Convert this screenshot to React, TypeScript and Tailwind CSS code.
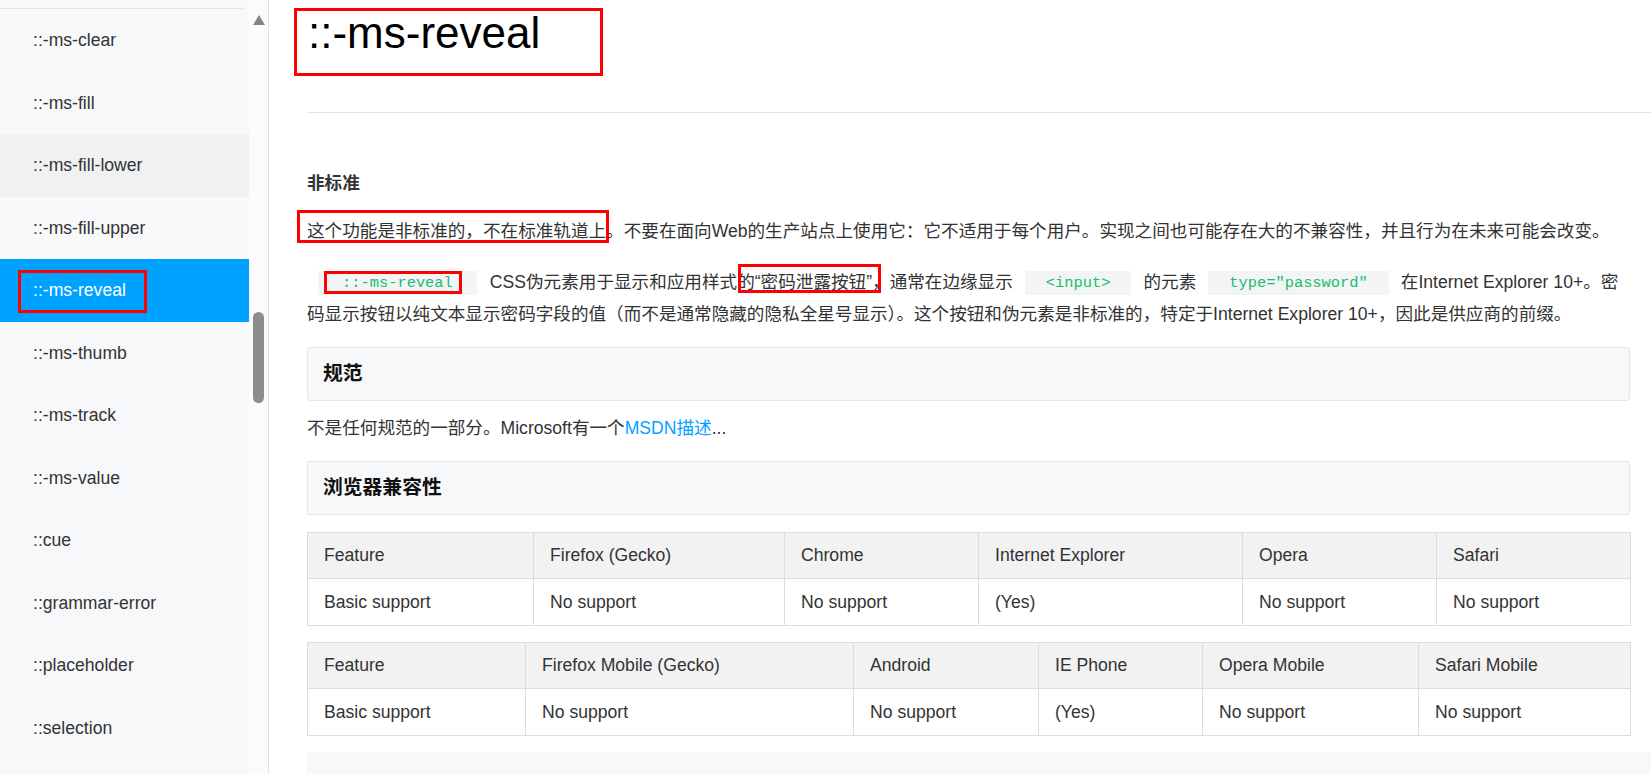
import React from "react";

const navItems = [
  "::-ms-clear",
  "::-ms-fill",
  "::-ms-fill-lower",
  "::-ms-fill-upper",
  "::-ms-reveal",
  "::-ms-thumb",
  "::-ms-track",
  "::-ms-value",
  "::cue",
  "::grammar-error",
  "::placeholder",
  "::selection",
];

const desktopCols = [
  { label: "Feature", w: "w-[226px]", value: "Basic support" },
  { label: "Firefox (Gecko)", w: "w-[251px]", value: "No support" },
  { label: "Chrome", w: "w-[194px]", value: "No support" },
  { label: "Internet Explorer", w: "w-[264px]", value: "(Yes)" },
  { label: "Opera", w: "w-[194px]", value: "No support" },
  { label: "Safari", w: "w-[194px]", value: "No support" },
];

const mobileCols = [
  { label: "Feature", w: "w-[218px]", value: "Basic support" },
  { label: "Firefox Mobile (Gecko)", w: "w-[328px]", value: "No support" },
  { label: "Android", w: "w-[185px]", value: "No support" },
  { label: "IE Phone", w: "w-[164px]", value: "(Yes)" },
  { label: "Opera Mobile", w: "w-[216px]", value: "No support" },
  { label: "Safari Mobile", w: "w-[212px]", value: "No support" },
];

function Sidebar() {
  return (
    <aside className="flex h-full w-[269px] shrink-0 border-r border-[#e2e2e2] bg-[#f7f8fa]">
      <div className="w-[249px] overflow-hidden">
        <div className="h-[9px] w-[243px] border-b border-[#e3e4e6]" />
        {navItems.map((name) => {
          const active = name === "::-ms-reveal";
          const hover = name === "::-ms-fill-lower";
          return (
            <div
              key={name}
              className={
                active
                  ? "relative flex h-[62.5px] items-center bg-[#00a2ff] pl-[33px] text-white"
                  : hover
                  ? "flex h-[62.5px] items-center bg-[#f0f1f3] pl-[33px] text-[#333]"
                  : "flex h-[62.5px] items-center pl-[33px] text-[#333]"
              }
            >
              {name}
              {active && (
                <span className="absolute left-[18px] top-[11px] h-[43px] w-[129px] border-[3px] border-[#ff0000]" />
              )}
            </div>
          );
        })}
      </div>
      <div className="flex w-[19px] flex-col items-center bg-[#fbfbfb]">
        <svg className="mt-[15px]" width="12" height="10" viewBox="0 0 12 10">
          <polygon points="6,0 12,10 0,10" fill="#858585" />
        </svg>
        <div className="mt-[287px] h-[91px] w-[11px] rounded-full bg-[#8c8c8c]" />
      </div>
    </aside>
  );
}

function Code({ children, wide }: { children: React.ReactNode; wide?: boolean }) {
  return (
    <code
      className={
        (wide ? "px-6 " : "px-[21px] ") +
        "relative inline-block h-[24px] bg-[#f3f4f6] align-middle font-['Liberation_Mono',monospace] text-[15.4px] leading-[24px] text-[#19be6b]"
      }
    >
      {children}
    </code>
  );
}

function SectionBox({ title }: { title: string }) {
  return (
    <div className="flex h-[54px] items-center rounded-[3px] border border-[#e4e6e9] bg-[#f7f8fa] pl-[15px]">
      <h3 className="text-[19.8px] font-bold text-[#111]">{title}</h3>
    </div>
  );
}

function CompatTable({ cols }: { cols: { label: string; w: string; value: string }[] }) {
  return (
    <table className="w-full table-fixed border-collapse border border-[#dcdcdc] text-left">
      <thead>
        <tr className="bg-[#f2f2f2]">
          {cols.map((c) => (
            <th key={c.label} className={c.w + " h-[46px] border border-[#dcdcdc] px-4 font-normal"}>
              {c.label}
            </th>
          ))}
        </tr>
      </thead>
      <tbody>
        <tr>
          {cols.map((c, i) => (
            <td key={i} className="h-[47px] border border-[#dcdcdc] px-4">
              {c.value}
            </td>
          ))}
        </tr>
      </tbody>
    </table>
  );
}

export default function App() {
  return (
    <div className="flex h-[774px] w-full overflow-hidden bg-white font-['Liberation_Sans','Noto_Sans_CJK_SC',sans-serif] text-[17.6px]">
      <Sidebar />
      <main className="min-w-0 flex-1 overflow-hidden pl-[38px] pr-[21px] text-[#333]">
        <h1 className="ml-[-13px] mt-2 h-[68px] w-[309px] border-[3px] border-[#ff0000] pl-[11px] text-[44px] leading-[44px] text-black">
          ::-ms-reveal
        </h1>
        <div className="mr-[-21px] mt-[36px] h-px bg-[#e3e3e3]" />

        <h4 className="mt-[54px] font-bold leading-[32px] text-[#333]">非标准</h4>
        <p className="mt-4 leading-[32px]">
          <span className="relative">
            这个功能是非标准的，不在标准轨道上
            <span className="absolute -left-[10px] -right-[3px] -top-[11px] -bottom-[2px] border-[3px] border-[#ff0000]" />
          </span>
          。不要在面向Web的生产站点上使用它：它不适用于每个用户。实现之间也可能存在大的不兼容性，并且行为在未来可能会改变。
        </p>

        <p className="mt-[19px] leading-[32px]">
          <span className="ml-[11px]" />
          <Code wide>
            ::-ms-reveal
            <span className="absolute left-[6px] right-[15px] top-0 bottom-[1px] border-[3px] border-[#ff0000]" />
          </Code>
          <span className="ml-[13px]">CSS伪元素用于显示和应用样式的</span>
          <span className="relative">
            “密码泄露按钮”，
            <span className="absolute -left-[17px] right-[9px] -top-[8px] -bottom-[1px] border-[3px] border-[#ff0000]" />
          </span>
          通常在边缘显示
          <span className="mx-3 inline-block">
            <Code>&lt;input&gt;</Code>
          </span>
          的元素
          <span className="mx-3 inline-block">
            <Code>type="password"</Code>
          </span>
          在Internet Explorer 10+。密码显示按钮以纯文本显示密码字段的值（而不是通常隐藏的隐私全星号显示）。这个按钮和伪元素是非标准的，特定于Internet Explorer 10+，因此是供应商的前缀。
        </p>

        <div className="mt-[17px]">
          <SectionBox title="规范" />
        </div>
        <p className="mt-[11px] leading-[32px]">
          不是任何规范的一部分。Microsoft有一个<a className="text-[#00a2ff]">MSDN描述</a>...
        </p>

        <div className="mt-[17px]">
          <SectionBox title="浏览器兼容性" />
        </div>

        <div className="mt-[17px]">
          <CompatTable cols={desktopCols} />
        </div>
        <div className="mt-4">
          <CompatTable cols={mobileCols} />
        </div>

        <div className="mr-[-21px] mt-4 h-[60px] bg-[#f7f8fa]" />
      </main>
    </div>
  );
}
